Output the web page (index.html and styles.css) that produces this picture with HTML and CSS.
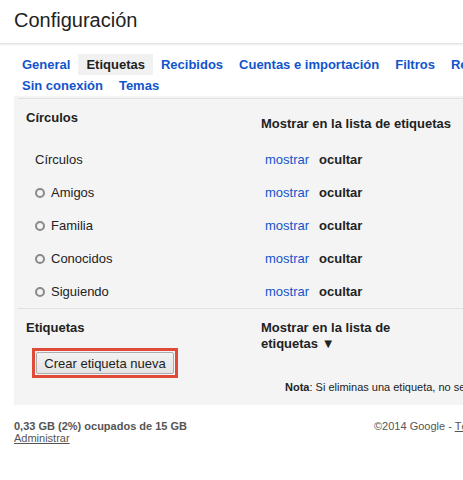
FILE: index.html
```html
<!DOCTYPE html>
<html lang="es">
<head>
  <meta charset="UTF-8" />
  <title>Configuración - Gmail</title>
  <link rel="stylesheet" href="styles.css">
</head>
<body>

  <header class="top">
    <h1>Configuración</h1>
  </header>

  <nav class="tabs">
    <div class="tab-row">
      <a class="tab" href="#">General</a>
      <a class="tab selected" href="#">Etiquetas</a>
      <a class="tab" href="#">Recibidos</a>
      <a class="tab" href="#">Cuentas e importación</a>
      <a class="tab" href="#">Filtros</a>
      <a class="tab" href="#">Reenvío y correo POP/IMAP</a>
      <a class="tab" href="#">Chat</a>
    </div>
    <div class="tab-row">
      <a class="tab" href="#">Sin conexión</a>
      <a class="tab" href="#">Temas</a>
    </div>
  </nav>

  <div class="panel">
    <div class="labels">

      <div class="section">
        <div class="head-left">Círculos</div>
        <div class="head-right low">Mostrar en la lista de etiquetas</div>

        <div class="name">Círculos</div>
        <div class="actions"><a href="#">mostrar</a><b>ocultar</b></div>

        <div class="name"><span class="ring"></span>Amigos</div>
        <div class="actions"><a href="#">mostrar</a><b>ocultar</b></div>

        <div class="name"><span class="ring"></span>Familia</div>
        <div class="actions"><a href="#">mostrar</a><b>ocultar</b></div>

        <div class="name"><span class="ring"></span>Conocidos</div>
        <div class="actions"><a href="#">mostrar</a><b>ocultar</b></div>

        <div class="name"><span class="ring"></span>Siguiendo</div>
        <div class="actions"><a href="#">mostrar</a><b>ocultar</b></div>
      </div>

      <div class="section">
        <div class="head-left">
          Etiquetas
          <div class="create">
            <span class="highlight"><button class="btn">Crear etiqueta nueva</button></span>
          </div>
        </div>
        <div class="head-right narrow">Mostrar en la lista de etiquetas &#9660;</div>
      </div>

      <p class="note"><b>Nota</b>: Si eliminas una etiqueta, no se eliminarán los mensajes que la tengan.</p>
    </div>
  </div>

  <footer class="foot">
    <div class="storage">
      <div class="used">0,33 GB (2%) ocupados de 15 GB</div>
      <a href="#">Administrar</a>
    </div>
    <div class="legal">©2014 Google - <a href="#">Términos y privacidad</a></div>
  </footer>

</body>
</html>
```

FILE: styles.css
```css
html {
  overflow: hidden;
}

body {
  font-family: 'Liberation Sans', Arial, sans-serif;
  font-size: 13px;
  color: #222;
  background: white;
  margin: 0;
  min-width: 640px;
}

a {
  color: #15c;
  text-decoration: none;
}

.top {
  height: 43px;
  border-bottom: 1px solid #e5e5e5;
  box-shadow: 0 1px 2px rgba(0,0,0,0.08);
}

.top h1 {
  margin: 0;
  padding: 9px 14px 0;
  font-size: 20px;
  font-weight: normal;
  color: #222;
}

.tabs {
  margin-top: 10px;
  padding-left: 14px;
}

.tab-row {
  display: flex;
  white-space: nowrap;
}

.tab {
  padding: 0 8px;
  line-height: 21px;
  font-weight: bold;
}

.tab.selected {
  color: #222;
  background: #f1f1f1;
}

.panel {
  margin-left: 14px;
  padding: 2px 0 0 4px;
  background: #f4f4f4;
}

.labels {
  border-top: 1px solid #e2e2e2;
}

.section {
  display: grid;
  grid-template-columns: 243px 1fr;
  border-bottom: 1px solid #e2e2e2;
}

.section:last-of-type {
  border-bottom: none;
}

.head-left {
  padding: 11px 0 0 8px;
  font-weight: bold;
  line-height: 15px;
  height: 33px;
}

.head-right {
  padding-top: 11px;
  font-weight: bold;
  line-height: 16px;
}

.head-right.low {
  padding-top: 17px;
}

.head-right.narrow {
  width: 150px;
}

.section:last-of-type .head-left {
  height: auto;
}

.name, .actions {
  height: 33px;
  display: flex;
  align-items: center;
}

.name {
  padding-left: 17px;
}

.actions {
  padding-left: 4px;
  gap: 10px;
}

.ring {
  flex: none;
  width: 10px;
  height: 10px;
  box-sizing: border-box;
  border: 2px solid #8a8a8a;
  border-radius: 50%;
  margin-right: 6px;
}

.create {
  padding: 13px 0 0 6px;
}

.highlight {
  display: inline-block;
  border: 3px solid #e04a38;
  padding: 1px;
}

.btn {
  display: block;
  font-family: 'Liberation Sans', Arial, sans-serif;
  font-size: 13px;
  color: #222;
  height: 22px;
  width: 138px;
  padding: 0;
  border: 1px solid #acacac;
  border-radius: 2px;
  background: linear-gradient(#f2f2f2, #e3e3e3);
}

.note {
  margin: 0;
  padding: 3px 0 11px 267px;
  font-size: 11px;
  line-height: 13px;
  white-space: nowrap;
}

.foot {
  display: grid;
  grid-template-columns: 360px 1fr;
  padding: 15px 0 0 14px;
  font-size: 11px;
  line-height: 12px;
  color: #555;
}

.foot a {
  color: #555;
  text-decoration: underline;
}

.used {
  font-weight: bold;
}

.legal {
  white-space: nowrap;
}
```
